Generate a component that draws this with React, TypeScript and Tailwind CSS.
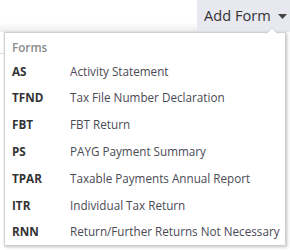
import React from "react";

const forms: [string, string][] = [
  ["AS", "Activity Statement"],
  ["TFND", "Tax File Number Declaration"],
  ["FBT", "FBT Return"],
  ["PS", "PAYG Payment Summary"],
  ["TPAR", "Taxable Payments Annual Report"],
  ["ITR", "Individual Tax Return"],
  ["RNN", "Return/Further Returns Not Necessary"],
];

export default function App() {
  return (
    <div
      className="relative w-[290px] h-[250px] bg-white overflow-hidden"
      style={{ fontFamily: '"Open Sans", sans-serif' }}
    >
      <div className="flex h-[32px]">
        <div className="flex-1 bg-gradient-to-b from-white from-70% to-[#ececec]" />
        <div className="w-[93px] bg-[#e8e8f1] flex items-center pl-[7px] text-[14.6px] text-[#333] gap-[7px]">
          <span>Add Form</span>
          <svg width="9" height="5" viewBox="0 0 9 5" className="mt-[1px]">
            <path d="M0 0h9L4.5 5z" fill="#444" />
          </svg>
        </div>
      </div>
      <div className="absolute left-0 top-[53px] w-[4px] h-px bg-[#ddd]" />
      <div className="absolute left-[4px] top-[32px] w-[282px] h-[214px] bg-white border border-[#d0d0d0] shadow-[1px_1px_3px_rgba(0,0,0,0.25)] pt-[4px]">
        <svg className="absolute right-[7px] -top-[5px]" width="12" height="6" viewBox="0 0 12 6">
          <path d="M0 6L6 0L12 6z" fill="#fff" />
          <path d="M0 6L6 0L12 6" fill="none" stroke="#d0d0d0" />
        </svg>
        <div className="h-[21px] pl-[7px] flex items-center text-[11.7px] font-semibold text-[#8a8a8a]">
          Forms
        </div>
        {forms.map(([code, name]) => (
          <div key={code} className="h-[26.8px] flex items-center pl-[7px] text-[11.7px] whitespace-nowrap">
            <span className="w-[58px] font-bold text-[#333]">{code}</span>
            <span className="text-[#4a4a55]">{name}</span>
          </div>
        ))}
      </div>
    </div>
  );
}
